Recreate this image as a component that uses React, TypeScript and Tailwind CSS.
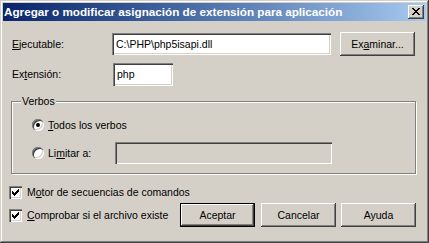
import React from "react";

const font = { fontFamily: '"Liberation Sans", Arial, sans-serif' };

const raised =
  "shadow-[inset_-1px_-1px_#404040,inset_1px_1px_#ffffff,inset_-2px_-2px_#808080,inset_2px_2px_#d4d0c8]";
const sunken =
  "shadow-[inset_1px_1px_#808080,inset_2px_2px_#404040,inset_-1px_-1px_#ffffff,inset_-2px_-2px_#d4d0c8]";

// checkmark clásico, columnas de 3 px
const checkCols = [2, 3, 4, 3, 2, 1, 0];
// X del botón de cerrar
const closeRows = ["XX....XX", ".XX..XX.", "..XXXX..", "...XX...", "..XXXX..", ".XX..XX.", "XX....XX"];

function CheckBox() {
  return (
    <span className={`relative w-[13px] h-[13px] bg-white shrink-0 ${sunken}`}>
      <svg className="absolute inset-0" width="13" height="13" viewBox="0 0 13 13" shapeRendering="crispEdges">
        {checkCols.map((y, i) => (
          <rect key={i} x={3 + i} y={3 + y} width="1" height="3" fill="#000" />
        ))}
      </svg>
    </span>
  );
}

function Radio({ checked }: { checked?: boolean }) {
  return (
    <span className="relative w-[12px] h-[12px] shrink-0 rounded-full bg-white shadow-[inset_1px_1px_#808080,inset_2px_2px_#404040,inset_-1px_-1px_#ffffff,inset_-2px_-2px_#d4d0c8] flex items-center justify-center">
      {checked && <span className="w-[4px] h-[4px] rounded-full bg-black" />}
    </span>
  );
}

function Btn({ children, isDefault }: { children: React.ReactNode; isDefault?: boolean }) {
  if (isDefault) {
    return (
      <div className="w-[75px] h-[24px] border border-black bg-[#d4d0c8] flex">
        <div className={`flex-1 flex items-center justify-center ${raised}`}>{children}</div>
      </div>
    );
  }
  return (
    <div className={`w-[75px] h-[24px] bg-[#d4d0c8] flex items-center justify-center ${raised}`}>{children}</div>
  );
}

export default function App() {
  return (
    <div
      className="w-[429px] h-[243px] bg-[#d4d0c8] text-black text-[10.5px] leading-none flex flex-col overflow-hidden shadow-[inset_-1px_-1px_#404040,inset_1px_1px_#d4d0c8,inset_-2px_-2px_#808080,inset_2px_2px_#ffffff]"
      style={font}
    >
      {/* Barra de título */}
      <div className="mx-[3px] mt-[3px] h-[18px] bg-gradient-to-r from-[#0a246a] to-[#a6caf0] flex items-center justify-between pl-[1px] pr-[2px]">
        <span className="text-white font-bold text-[11.7px]">
          Agregar o modificar asignación de extensión para aplicación
        </span>
        <div className={`relative w-[16px] h-[14px] bg-[#d4d0c8] ${raised}`}>
          <svg className="absolute left-[4px] top-[3px]" width="8" height="7" viewBox="0 0 8 7" shapeRendering="crispEdges">
            {closeRows.map((row, y) =>
              row.split("").map((c, x) =>
                c === "X" ? <rect key={`${x}-${y}`} x={x} y={y} width="1" height="1" fill="#000" /> : null
              )
            )}
          </svg>
        </div>
      </div>

      {/* Ejecutable */}
      <div className="mt-[11px] h-[24px] flex items-center">
        <span className="w-[112px] pl-[12px]">
          <u>E</u>jecutable:
        </span>
        <div className={`w-[219px] h-[22px] bg-white flex items-center px-[4px] ${sunken}`}>C:\PHP\php5isapi.dll</div>
        <div className="ml-[9px]">
          <Btn>
            Ex<u>a</u>minar...
          </Btn>
        </div>
      </div>

      {/* Extensión */}
      <div className="mt-[7px] h-[23px] flex items-center">
        <span className="w-[113px] pl-[12px]">
          Ex<u>t</u>ensión:
        </span>
        <div className={`w-[60px] h-[23px] bg-white flex items-center px-[4px] ${sunken}`}>php</div>
      </div>

      {/* Verbos */}
      <div className="relative mt-[15px] ml-[11px] w-[405px] h-[73px] border border-[#808080] shadow-[inset_1px_1px_#ffffff,1px_1px_#ffffff] pt-[15px]">
        <span className="absolute -top-[6px] left-[9px] px-[1px] bg-[#d4d0c8]">Verbos</span>
        <div className="h-[16px] flex items-center pl-[20px] gap-[4px]">
          <Radio checked />
          <span>
            <u>T</u>odos los verbos
          </span>
        </div>
        <div className="mt-[9px] h-[22px] flex items-center pl-[20px]">
          <Radio />
          <span className="ml-[4px] w-[67px]">
            Li<u>m</u>itar a:
          </span>
          <div className={`w-[217px] h-[22px] bg-[#d4d0c8] ${sunken}`} />
        </div>
      </div>

      {/* Casillas y botones */}
      <div className="mt-[11px] h-[14px] flex items-center pl-[9px] gap-[5px]">
        <CheckBox />
        <span>
          M<u>o</u>tor de secuencias de comandos
        </span>
      </div>
      <div className="mt-[4px] h-[24px] flex items-center">
        <div className="w-[180px] flex items-center pl-[9px] gap-[5px]">
          <CheckBox />
          <span>
            <u>C</u>omprobar si el archivo existe
          </span>
        </div>
        <Btn isDefault>Aceptar</Btn>
        <div className="ml-[6px]">
          <Btn>Cancelar</Btn>
        </div>
        <div className="ml-[5px]">
          <Btn>Ayuda</Btn>
        </div>
      </div>
    </div>
  );
}
